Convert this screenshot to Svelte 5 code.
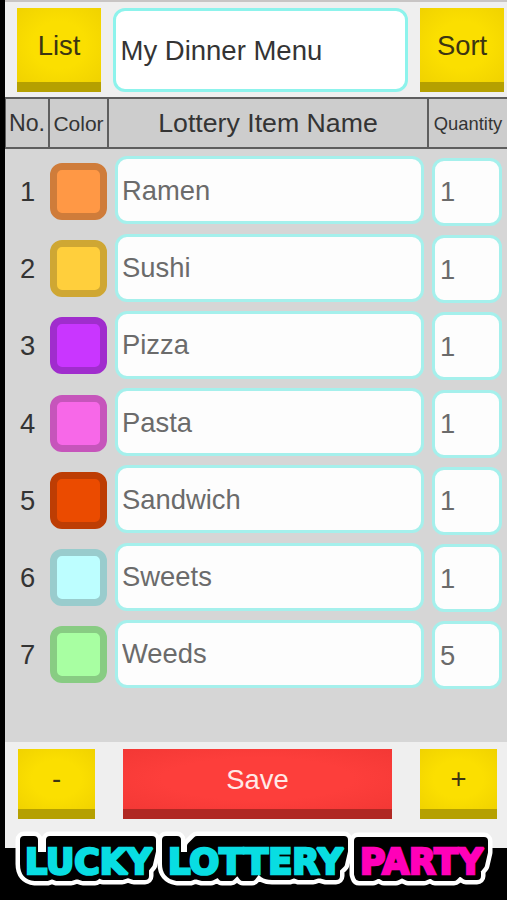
<script>
  let title = $state('My Dinner Menu');

  let items = $state([
    { name: 'Ramen', quantity: 1, color: '#ff9845', edge: '#cf7c3a' },
    { name: 'Sushi', quantity: 1, color: '#ffcf3c', edge: '#cfa733' },
    { name: 'Pizza', quantity: 1, color: '#c936ff', edge: '#a02dcd' },
    { name: 'Pasta', quantity: 1, color: '#f768e8', edge: '#c655bb' },
    { name: 'Sandwich', quantity: 1, color: '#eb4b00', edge: '#bd3d04' },
    { name: 'Sweets', quantity: 1, color: '#bdfeff', edge: '#99cccd' },
    { name: 'Weeds', quantity: 5, color: '#a8ffa2', edge: '#88cc83' }
  ]);

  // Words of the logo, each on its own black plate
  const words = [
    {
      text: 'LUCKY',
      x: 25,
      width: 127,
      fill: '#08dde2',
      plate: 'M24 840H34V856H50V840H152V851L149 864L145 869V876H134L128 874L122 876H103L99 874L95 877H83L77 875L71 877H57L52 875L47 877H35Q24 876 24 864Z'
    },
    {
      text: 'LOTTERY',
      x: 168,
      width: 175,
      fill: '#08dde2',
      plate: 'M166 840H177V856H191V846L197 840H344V851L341 864L336 869V876H326L319 874L313 876H299L294 874L289 876H272Q262 876 260 868L257 862H255V873L252 877H243L240 873V862H235V873L231 877H222L219 873L211 877H202L195 875L190 877H177Q166 875 166 864Z'
    },
    {
      text: 'PARTY',
      x: 360,
      width: 123,
      fill: '#ff00b8',
      plate: 'M358 841H484V852L481 865L477 870V876H466L462 873H458L454 877H435L431 874L424 877H408L402 874L396 877H384L379 874L373 877H359L358 874Z'
    }
  ];

  function addItem() {
    items.push({ name: '', quantity: 1, color: '#ffffff', edge: '#cccccc' });
  }

  function removeItem() {
    items.pop();
  }
</script>

<div class="screen">
  <div class="app">
    <header class="top">
      <button class="btn yellow square">List</button>
      <input class="title" bind:value={title} aria-label="Menu name" />
      <button class="btn yellow square">Sort</button>
    </header>

    <div class="columns">
      <div class="no">No.</div>
      <div class="color">Color</div>
      <div class="name">Lottery Item Name</div>
      <div class="qty">Quantity</div>
    </div>

    <div class="list">
      {#each items as item, i}
        <div class="row">
          <span class="index">{i + 1}</span>
          <button
            class="swatch"
            aria-label="Color"
            style="background-color: {item.color}; border-color: {item.edge}"
          ></button>
          <input class="field item-name" bind:value={item.name} aria-label="Item name" />
          <input class="field item-qty" bind:value={item.quantity} aria-label="Quantity" />
        </div>
      {/each}
    </div>

    <footer class="bottom">
      <button class="btn yellow small" onclick={removeItem}>-</button>
      <button class="btn red">Save</button>
      <button class="btn yellow small" onclick={addItem}>+</button>
    </footer>
  </div>

  <svg class="logo" width="507" height="75" viewBox="0 825 507 75">
    {#each words as word}
      <path class="rim" d={word.plate} />
    {/each}
    {#each words as word}
      <path class="plate" d={word.plate} />
      <text
        x={word.x}
        y="873.5"
        textLength={word.width}
        lengthAdjust="spacingAndGlyphs"
        fill={word.fill}
        stroke={word.fill}>{word.text}</text>
    {/each}
  </svg>
</div>

<style>
  :global(body) {
    background: #000;
  }

  .screen {
    position: relative;
    box-sizing: border-box;
    width: 507px;
    height: 900px;
    padding-left: 5px;
    overflow: hidden;
    background: #000;
    color: #343434;
    font-family: 'Liberation Sans', Arial, sans-serif;
    font-size: 27.4px;
  }

  .app {
    display: flex;
    flex-direction: column;
    height: 848px;
    background: #d6d6d6;
  }

  button,
  input {
    box-sizing: border-box;
    margin: 0;
    font: inherit;
    color: inherit;
    outline: none;
  }

  .top {
    display: flex;
    box-sizing: border-box;
    height: 97px;
    padding: 6px 3px 0 12px;
    border-top: 2px solid #c8c5c4;
    background: #efefef;
  }

  .btn {
    flex: none;
    border: 0;
    padding: 0;
  }

  .yellow {
    border-bottom: 10px solid #b5a000;
    background: radial-gradient(ellipse at center, #fbdf00 45%, #f0d200 100%);
    color: #3c3512;
  }

  .red {
    width: 269px;
    height: 70px;
    padding-top: 1px;
    border-bottom: 10px solid #b02823;
    background: radial-gradient(ellipse at center, #fd3e3b 50%, #f33835 100%);
    color: #ffe9e7;
  }

  .square {
    width: 84px;
    height: 84px;
    padding-top: 2px;
  }

  .small {
    width: 77px;
    height: 70px;
  }

  .title {
    width: 295px;
    height: 84px;
    margin: 0 12px;
    padding: 2px 0 0 4.5px;
    border: 3px solid #8df3ec;
    border-radius: 12px;
    background: #fff;
    font-size: 27.5px;
  }

  .columns {
    display: flex;
    box-sizing: border-box;
    height: 52px;
    border: solid #5e5e5e;
    border-width: 2px 0 2px 1px;
    background: #cdcdcd;
  }

  .columns div {
    display: flex;
    box-sizing: border-box;
    align-items: center;
    justify-content: center;
    border-right: 2px solid #5e5e5e;
    white-space: nowrap;
  }

  .columns .no {
    width: 44px;
    font-size: 23.2px;
  }

  .columns .color {
    width: 59px;
    padding-top: 1px;
    font-size: 21px;
  }

  .columns .name {
    width: 320px;
    padding-top: 1px;
    font-size: 26.7px;
  }

  .columns .qty {
    flex: 1;
    padding-top: 1px;
    border-right: 0;
    font-size: 18.4px;
  }

  .list {
    flex: 1;
    padding-top: 7.4px;
  }

  .row {
    display: flex;
    align-items: center;
    height: 70px;
    margin-bottom: 7.25px;
  }

  .index {
    width: 45px;
    padding-top: 1px;
    text-align: center;
  }

  .swatch {
    width: 57px;
    height: 57px;
    padding: 0;
    border: 7px solid;
    border-radius: 12px;
  }

  .field {
    height: 68px;
    padding: 1px 0 0 4px;
    border: 3px solid #a5f0ec;
    border-radius: 12px;
    background: #fdfdfd;
    color: #6b6b6b;
  }

  .item-name {
    width: 309px;
    margin: 0 8px 2px;
  }

  .item-qty {
    width: 70px;
    margin-top: 1px;
    padding-left: 5px;
  }

  .bottom {
    display: flex;
    box-sizing: border-box;
    height: 106px;
    padding: 7px 10px 0 13px;
    justify-content: space-between;
    background: #efefef;
  }

  .logo {
    position: absolute;
    left: 0;
    bottom: 0;
  }

  .logo path {
    stroke-linejoin: round;
  }

  .rim {
    fill: #fff;
    stroke: #fff;
    stroke-width: 17px;
  }

  .plate {
    fill: #000;
    stroke: #000;
    stroke-width: 8px;
  }

  .logo text {
    font-family: 'DejaVu Sans', sans-serif;
    font-size: 35px;
    font-weight: bold;
    stroke-width: 2.6px;
    stroke-linejoin: miter;
    stroke-miterlimit: 2;
  }
</style>
